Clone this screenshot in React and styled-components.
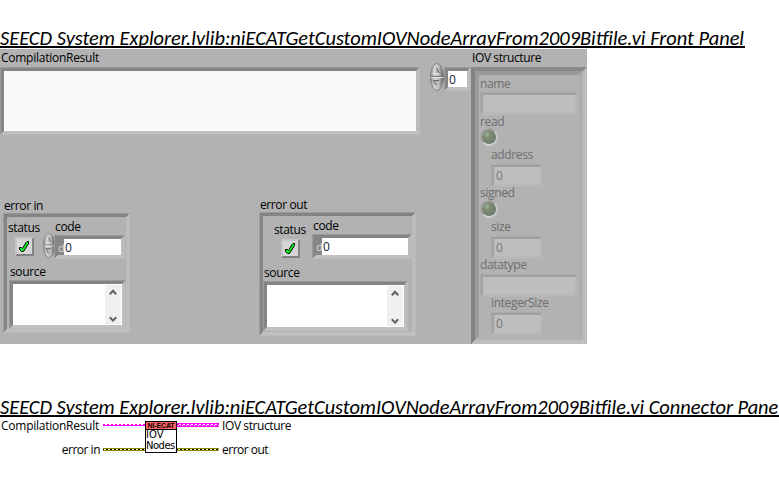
import React from 'react';
import styled, { createGlobalStyle } from 'styled-components';

const GlobalStyle = createGlobalStyle`
  body { margin: 0; background: #fff; overflow: hidden; }
  * { box-sizing: border-box; }
`;

const Page = styled.main`
  display: flex;
  flex-direction: column;
  align-items: flex-start;
  width: 779px;
  height: 482px;
  padding-top: 26px;
  overflow: hidden;
  font-family: 'Open Sans', 'Noto Sans', sans-serif;
  font-size: 12px;
  color: #000;
`;

const Heading = styled.h1`
  margin: 0;
  width: ${(p) => p.$width}px;
  height: 22px;
  padding-top: 4px;
  border-bottom: 2px solid #000;
  font: italic 400 ${(p) => p.$size}px/16px Carlito, Lato, sans-serif;
  white-space: nowrap;
`;

const LowerHeading = styled(Heading)`
  margin-top: 51px;
`;

const Label = styled.div`
  height: 16px;
  line-height: 18px;
  letter-spacing: ${(p) => p.$tracking ?? -0.35}px;
  white-space: nowrap;
  color: ${(p) => (p.$dim ? '#6e6e6e' : '#000')};
  padding-left: ${(p) => p.$indent ?? 0}px;
  margin-top: ${(p) => p.$gap ?? 0}px;
`;

const FrontPanel = styled.section`
  display: flex;
  align-items: flex-start;
  width: 587px;
  height: 295px;
  margin-top: 1px;
  background: #b2b2b2;
`;

const MainColumn = styled.div`
  width: 430px;
`;

const Rim = styled.div`
  flex: none;
  display: flex;
  width: ${(p) => p.$w}px;
  height: ${(p) => p.$h}px;
  margin-top: ${(p) => p.$gap ?? 0}px;
  margin-left: ${(p) => p.$indent ?? 0}px;
  border: ${(p) => p.$rim ?? 1}px solid;
  border-color: ${(p) => (p.$dim ? '#a9a9a9 #b5b5b5 #b7b7b7 #a9a9a9' : p.$rim ? '#8a8a8a #bdbdbd #bfbfbf #828282' : '#999 #b9b9b9 #bbb #9b9b9b')};
`;

const Well = styled.div`
  flex: 1;
  min-width: 0;
  display: flex;
  flex-direction: ${(p) => (p.$row ? 'row' : 'column')};
  border: ${(p) => p.$edge ?? 3}px solid;
  border-color: ${(p) => (p.$dim ? '#a0a0a0 #b7b7b7 #b9b9b9 #a2a2a2' : p.$soft ? '#999 #afafaf #b1b1b1 #9b9b9b' : '#848484 #bdbdbd #c0c0c0 #858585')};
  background: ${(p) => p.$fill ?? 'transparent'};
`;

const Value = styled.span`
  line-height: 17px;
  padding-left: ${(p) => p.$pad ?? 1}px;
  color: ${(p) => (p.$dim ? '#777' : '#123')};
`;

const Radix = styled.span`
  flex: none;
  width: 6px;
  background: #868686;
  color: #ddd;
  font-size: 11px;
  line-height: 17px;
  text-align: right;
  overflow: hidden;
`;

const Groups = styled.div`
  display: flex;
  align-items: flex-start;
`;

const Group = styled.div`
  margin-top: ${(p) => p.$top}px;
  margin-left: ${(p) => p.$left}px;
`;

const ControlRow = styled.div`
  display: flex;
  align-items: flex-start;
  height: ${(p) => p.$h}px;
`;

const StatusColumn = styled.div`
  flex: none;
  width: ${(p) => p.$w}px;
  padding-left: ${(p) => p.$left}px;
  padding-top: ${(p) => p.$top}px;
`;

const CheckButton = styled.div`
  display: flex;
  width: 19px;
  height: 19px;
  margin: 2px 0 0 7px;
  border: 2px solid;
  border-color: #c8c8c8 #858585 #808080 #c5c5c5;
  background: #d6d6d6;
`;

const CodeColumn = styled.div`
  flex: none;
  margin-left: ${(p) => p.$shift ?? 0}px;
`;

const SpinnerSlot = styled.div`
  flex: none;
  display: flex;
  padding-top: ${(p) => p.$top}px;
`;

const ScrollTrack = styled.div`
  display: flex;
  flex-direction: column;
  justify-content: space-between;
  align-items: center;
  align-self: flex-end;
  width: 16px;
  height: 40px;
  margin: 1px 1px 1px 0;
  padding: 4px 0 1px;
  background: #f0f0f0;
`;

const StructColumn = styled.div`
  width: 116px;
`;

const Led = styled.div`
  width: 18px;
  height: 18px;
  margin: ${(p) => p.$gap}px 0 0 1px;
  border-radius: 50%;
  border: 2px solid;
  border-color: #a2a2a2 #c9c9c9 #d2d2d2 #a4a4a4;
  background: radial-gradient(circle at 35% 32%, #a3b39f 0, #7e8f79 25%, #70806c 60%, #657262 100%);
`;

const Connector = styled.section`
  display: grid;
  grid-template-columns: 103px 42px 32px 42px 100px;
  grid-template-rows: 16px 24px;
  align-items: start;
`;

const Terminal = styled.div`
  display: flex;
  justify-content: ${(p) => (p.$out ? 'flex-start' : 'flex-end')};
  padding: ${(p) => (p.$out ? '0 0 0 3px' : `0 ${p.$inset}px 0 0`)};
  margin-top: ${(p) => p.$drop ?? 0}px;
`;

const WireSlot = styled.div`
  display: flex;
  padding-top: ${(p) => p.$top}px;
`;

const VIIcon = styled.div`
  grid-row: 1 / 3;
  grid-column: 3;
  width: 32px;
  height: 32px;
  margin-top: 4px;
  border: 1px solid #000;
  background: #fff;
  overflow: hidden;
`;

const IconBanner = styled.div`
  height: 8px;
  border-bottom: 1px solid #000;
  background: #ff6464;
  font: 700 7px/8px 'Liberation Sans', sans-serif;
  letter-spacing: -0.15px;
  text-align: center;
  white-space: nowrap;
`;

const IconText = styled.div`
  padding-left: ${(p) => p.$indent}px;
  font: 10px/11px 'DejaVu Sans', sans-serif;
  letter-spacing: ${(p) => p.$tracking}px;
  margin-top: ${(p) => p.$gap}px;
  white-space: nowrap;
`;

function Box({ w, h, gap, indent, dim, fill, row, children }) {
  return (
    <Rim $w={w} $h={h} $gap={gap} $indent={indent} $dim={dim}>
      <Well $dim={dim} $edge={dim ? 2 : 3} $fill={fill} $row={row}>{children}</Well>
    </Rim>
  );
}

function Spinner({ w, h }) {
  return (
    <svg width={w} height={h} viewBox="0 0 14 28" preserveAspectRatio="none">
      <defs>
        <linearGradient id="metal" x1="0" x2="1">
          <stop offset="0" stopColor="#888" />
          <stop offset=".3" stopColor="#d4d4d4" />
          <stop offset=".65" stopColor="#bcbcbc" />
          <stop offset="1" stopColor="#5c5c5c" />
        </linearGradient>
      </defs>
      <ellipse cx="7" cy="14" rx="6.5" ry="13.5" fill="url(#metal)" stroke="#808080" strokeWidth=".9" />
      <path d="M1 13.5h12" stroke="#777" />
      <path d="M1 14.5h12" stroke="#e4e4e4" />
      <path d="M3.5 10.5 6.5 5l3 5.5z" fill="#b4b4b4" stroke="#eee" strokeWidth=".9" />
      <path d="M6.5 5l3 5.5" stroke="#555" fill="none" />
      <path d="M3.5 17.5h6L6.5 23z" fill="#b4b4b4" stroke="#666" />
      <path d="M9.5 17.5 6.5 23" stroke="#eee" strokeWidth=".8" />
    </svg>
  );
}

function Check() {
  return (
    <svg width="15" height="15" viewBox="0 0 15 15" fill="none">
      <path d="M2.5 8.5h2l1 1L9 3.5l1-1h1.5v2L6.5 12.5h-2l-2-2z" fill="#00f51c" stroke="#000" strokeWidth="1" />
    </svg>
  );
}

function Chevron({ down }) {
  return (
    <svg width="8" height="7" viewBox="0 0 8 7">
      <path d={down ? 'M.8 1.2 4 4.6 7.2 1.2' : 'M.8 5.2 4 1.8 7.2 5.2'} fill="none" stroke="#606060" strokeWidth="2" />
    </svg>
  );
}

function StringWire() {
  return (
    <svg width="42" height="3" viewBox="0 0 42 3" shapeRendering="crispEdges">
      <defs>
        <pattern id="str" width="4" height="3" patternUnits="userSpaceOnUse">
          <path d="M0 0h2v1H0zM0 1h1v1H0zM1 1h3v1H1z" fill="#ff00ff" />
        </pattern>
      </defs>
      <rect width="42" height="3" fill="url(#str)" />
    </svg>
  );
}

function ArrayWire() {
  return (
    <svg width="42" height="4" viewBox="0 0 42 4" shapeRendering="crispEdges">
      <defs>
        <pattern id="arr" width="4" height="4" patternUnits="userSpaceOnUse">
          <rect width="4" height="4" fill="#ff00ff" />
          <path d="M2 1h2v1H2zM1 2h1v1H1z" fill="#fff" />
        </pattern>
      </defs>
      <rect width="42" height="4" fill="url(#arr)" />
    </svg>
  );
}

function ErrorWire() {
  return (
    <svg width="42" height="3" viewBox="0 0 42 3" shapeRendering="crispEdges">
      <rect width="42" height="3" fill="#888400" />
      <path d="M0 1.5h42" stroke="#000" />
      <path d="M1 1.5h41" stroke="#ffff80" strokeDasharray="2 2" />
    </svg>
  );
}

function ErrorCluster({ title, w, h, top, left, status, code, spinner, source }) {
  return (
    <Group $top={top} $left={left}>
      <Label $indent={1} $gap={1} $tracking={-0.4}>{title}</Label>
      <Rim $w={w} $h={h}>
        <Well>
          <ControlRow $h={source.top}>
            <StatusColumn $w={status.w} $left={status.left} $top={status.top}>
              <Label>status</Label>
              <CheckButton><Check /></CheckButton>
            </StatusColumn>
            {spinner && <SpinnerSlot $top={16}><Spinner w={12} h={25} /></SpinnerSlot>}
            <CodeColumn $shift={spinner ? -1 : 0}>
              <Label $indent={1} $gap={1}>code</Label>
              <Box w={code.w} h={code.h} gap={1} fill="#fff" row>
                <Radix>d</Radix>
                <Value>0</Value>
              </Box>
            </CodeColumn>
          </ControlRow>
          <Label $indent={source.indent}>source</Label>
          <Box w={source.w} h={source.h} gap={1} indent={source.indent - 1} fill="#fff">
            <ScrollTrack><Chevron /><Chevron down /></ScrollTrack>
          </Box>
        </Well>
      </Rim>
    </Group>
  );
}

function NumberField({ label, gap }) {
  return (
    <>
      <Label $dim $indent={12} $gap={gap}>{label}</Label>
      <Box w={52} h={23} gap={2} indent={12} dim fill="#bebebe" row>
        <Value $dim $pad={2}>0</Value>
      </Box>
    </>
  );
}

function StringField({ label, gap, boxGap }) {
  return (
    <>
      <Label $dim $indent={1} $gap={gap}>{label}</Label>
      <Box w={98} h={23} gap={boxGap} indent={1} dim fill="#bebebe" />
    </>
  );
}

function BooleanField({ label, gap, ledGap }) {
  return (
    <>
      <Label $dim $indent={1} $gap={gap}>{label}</Label>
      <Led $gap={ledGap} />
    </>
  );
}

export default function App() {
  return (
    <>
      <GlobalStyle />
      <Page>
        <Heading $width={745} $size={20.42}>
          SEECD System Explorer.lvlib:niECATGetCustomIOVNodeArrayFrom2009Bitfile.vi Front Panel
        </Heading>
        <FrontPanel>
          <MainColumn>
            <Label $indent={1} $tracking={-0.26}>CompilationResult</Label>
            <Box w={420} h={68} gap={2} fill="#fafafa" />
            <Groups>
              <ErrorCluster
                title="error in" top={61} left={3} w={127} h={120}
                status={{ w: 36, left: 1, top: 2 }}
                code={{ w: 71, h: 24 }}
                source={{ top: 46, indent: 3, w: 117, h: 49 }}
                spinner
              />
              <ErrorCluster
                title="error out" top={60} left={129} w={157} h={124}
                status={{ w: 49, left: 11, top: 5 }}
                code={{ w: 100, h: 25 }}
                source={{ top: 48, indent: 1, w: 145, h: 50 }}
              />
            </Groups>
          </MainColumn>
          <SpinnerSlot $top={14}><Spinner w={14} h={28} /></SpinnerSlot>
          <Box w={27} h={24} gap={18} fill="#fff" row><Value>0</Value></Box>
          <StructColumn>
            <Label $indent={1} $tracking={-0.4}>IOV structure</Label>
            <Rim $w={116} $h={277} $gap={2} $rim={4}>
              <Well $soft $edge={4}>
                <StringField label="name" gap={0} boxGap={1} />
                <BooleanField label="read" gap={-2} ledGap={-1} />
                <NumberField label="address" gap={0} />
                <BooleanField label="signed" gap={-3} ledGap={0} />
                <NumberField label="size" gap={0} />
                <StringField label="datatype" gap={-3} boxGap={2} />
                <NumberField label="integerSize" gap={-3} />
              </Well>
            </Rim>
          </StructColumn>
        </FrontPanel>
        <LowerHeading as="h2" $width={779} $size={20.37}>
          SEECD System Explorer.lvlib:niECATGetCustomIOVNodeArrayFrom2009Bitfile.vi Connector Pane
        </LowerHeading>
        <Connector>
          <Terminal $inset={4}><Label $tracking={-0.26}>CompilationResult</Label></Terminal>
          <WireSlot $top={7}><StringWire /></WireSlot>
          <VIIcon>
            <IconBanner>NI-ECAT</IconBanner>
            <IconText $gap={-1} $indent={0} $tracking={0}>IOV</IconText>
            <IconText $gap={0} $indent={0} $tracking={-0.5}>Nodes</IconText>
          </VIIcon>
          <WireSlot $top={6}><ArrayWire /></WireSlot>
          <Terminal $out><Label $tracking={-0.4}>IOV structure</Label></Terminal>
          <Terminal $inset={3} $drop={8}><Label $tracking={-0.5}>error in</Label></Terminal>
          <WireSlot $top={15}><ErrorWire /></WireSlot>
          <WireSlot $top={15}><ErrorWire /></WireSlot>
          <Terminal $out $drop={8}><Label $tracking={-0.5}>error out</Label></Terminal>
        </Connector>
      </Page>
    </>
  );
}
